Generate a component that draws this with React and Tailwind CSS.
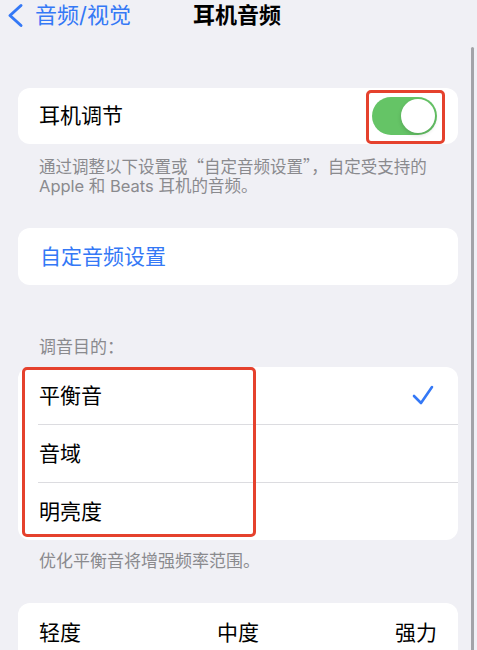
const font = { fontFamily: 'Inter, "Noto Sans CJK SC", sans-serif' };
const cjk = { fontFamily: '"Noto Sans CJK SC", sans-serif' };

function Row({ label, checked, last }) {
  return (
    <>
      <div className="h-[57px] flex items-center justify-between pl-[21px] pr-[24px]">
        <span className="text-[21px] text-black">{label}</span>
        {checked && (
          <svg width="22" height="20" viewBox="0 0 22 20" className="mt-[-2px]">
            <path d="M2 11 L9 18 L20 2" fill="none" stroke="#3478f6" strokeWidth="2.6" strokeLinecap="round" strokeLinejoin="round" />
          </svg>
        )}
      </div>
      {!last && <div className="ml-[20px] h-px bg-[#dcdce0]" />}
    </>
  );
}

export default function App() {
  return (
    <div lang="zh-CN" className="relative w-[477px] h-[650px] overflow-hidden bg-[#f0f0f5]" style={font}>
      {/* scrollbar */}
      <div className="absolute right-[3px] top-[47px] w-[3px] h-[620px] rounded-full bg-[#a3a3a8]" />

      {/* nav bar */}
      <div className="relative h-[30px] flex items-center">
        <svg width="20" height="26" viewBox="0 0 20 26" className="ml-[5px] mt-[2px]">
          <path d="M16 2.5 L5 12.5 L16 22.5" fill="none" stroke="#3478f6" strokeWidth="3" strokeLinecap="round" strokeLinejoin="round" />
        </svg>
        <span className="ml-[10px] text-[22px] text-[#3478f6]">音频/视觉</span>
        <span className="absolute left-[193px] top-0 h-[30px] flex items-center text-[22px] font-semibold text-black">耳机音频</span>
      </div>

      <div className="pl-[18px] pr-[19px]">
        {/* headphone accommodations */}
        <div className="relative mt-[58px] h-[56px] rounded-[12px] bg-white flex items-center justify-between pl-[21px] pr-[21px]">
          <span className="text-[21px] text-black">耳机调节</span>
          <div className="w-[65px] h-[38px] rounded-full bg-[#65c466] flex items-center justify-end pr-[2px]">
            <div className="w-[34px] h-[34px] rounded-full bg-white shadow-[0_2px_4px_rgba(0,0,0,0.15)]" />
          </div>
          <div className="absolute left-[348px] top-[2px] w-[79px] h-[54px] rounded-[5px] border-[3px] border-[#e5412d]" />
        </div>
        <p className="mt-[13px] pl-[21px] whitespace-nowrap text-[16.5px] leading-[19px] text-[#8a8a8e]">
          通过调整以下设置或<span style={cjk}>“</span>自定音频设置<span style={cjk}>”</span>，自定受支持的
          <br />
          Apple 和 Beats 耳机的音频。
        </p>

        {/* custom audio setup */}
        <div className="mt-[32px] h-[57px] rounded-[12px] bg-white flex items-center pl-[22px]">
          <span className="text-[21px] text-[#3478f6]">自定音频设置</span>
        </div>

        {/* tune for */}
        <p className="mt-[53px] px-[21px] text-[17px] leading-[19px] text-[#8a8a8e]">调音目的：</p>
        <div className="relative mt-[10px] rounded-[12px] bg-white">
          <Row label="平衡音" checked />
          <Row label="音域" />
          <Row label="明亮度" last />
          <div className="absolute left-[4px] top-0 w-[234px] h-[170px] rounded-[5px] border-[3px] border-[#e5412d]" />
        </div>
        <p className="mt-[12px] px-[21px] text-[17px] leading-[19px] text-[#8a8a8e]">优化平衡音将增强频率范围。</p>

        {/* strength */}
        <div className="mt-[32px] h-[80px] rounded-[12px] bg-white">
          <div className="h-[60px] grid grid-cols-3 items-center px-[21px] text-[21px] text-black">
            <span>轻度</span>
            <span className="text-center">中度</span>
            <span className="text-right">强力</span>
          </div>
        </div>
      </div>
    </div>
  );
}
